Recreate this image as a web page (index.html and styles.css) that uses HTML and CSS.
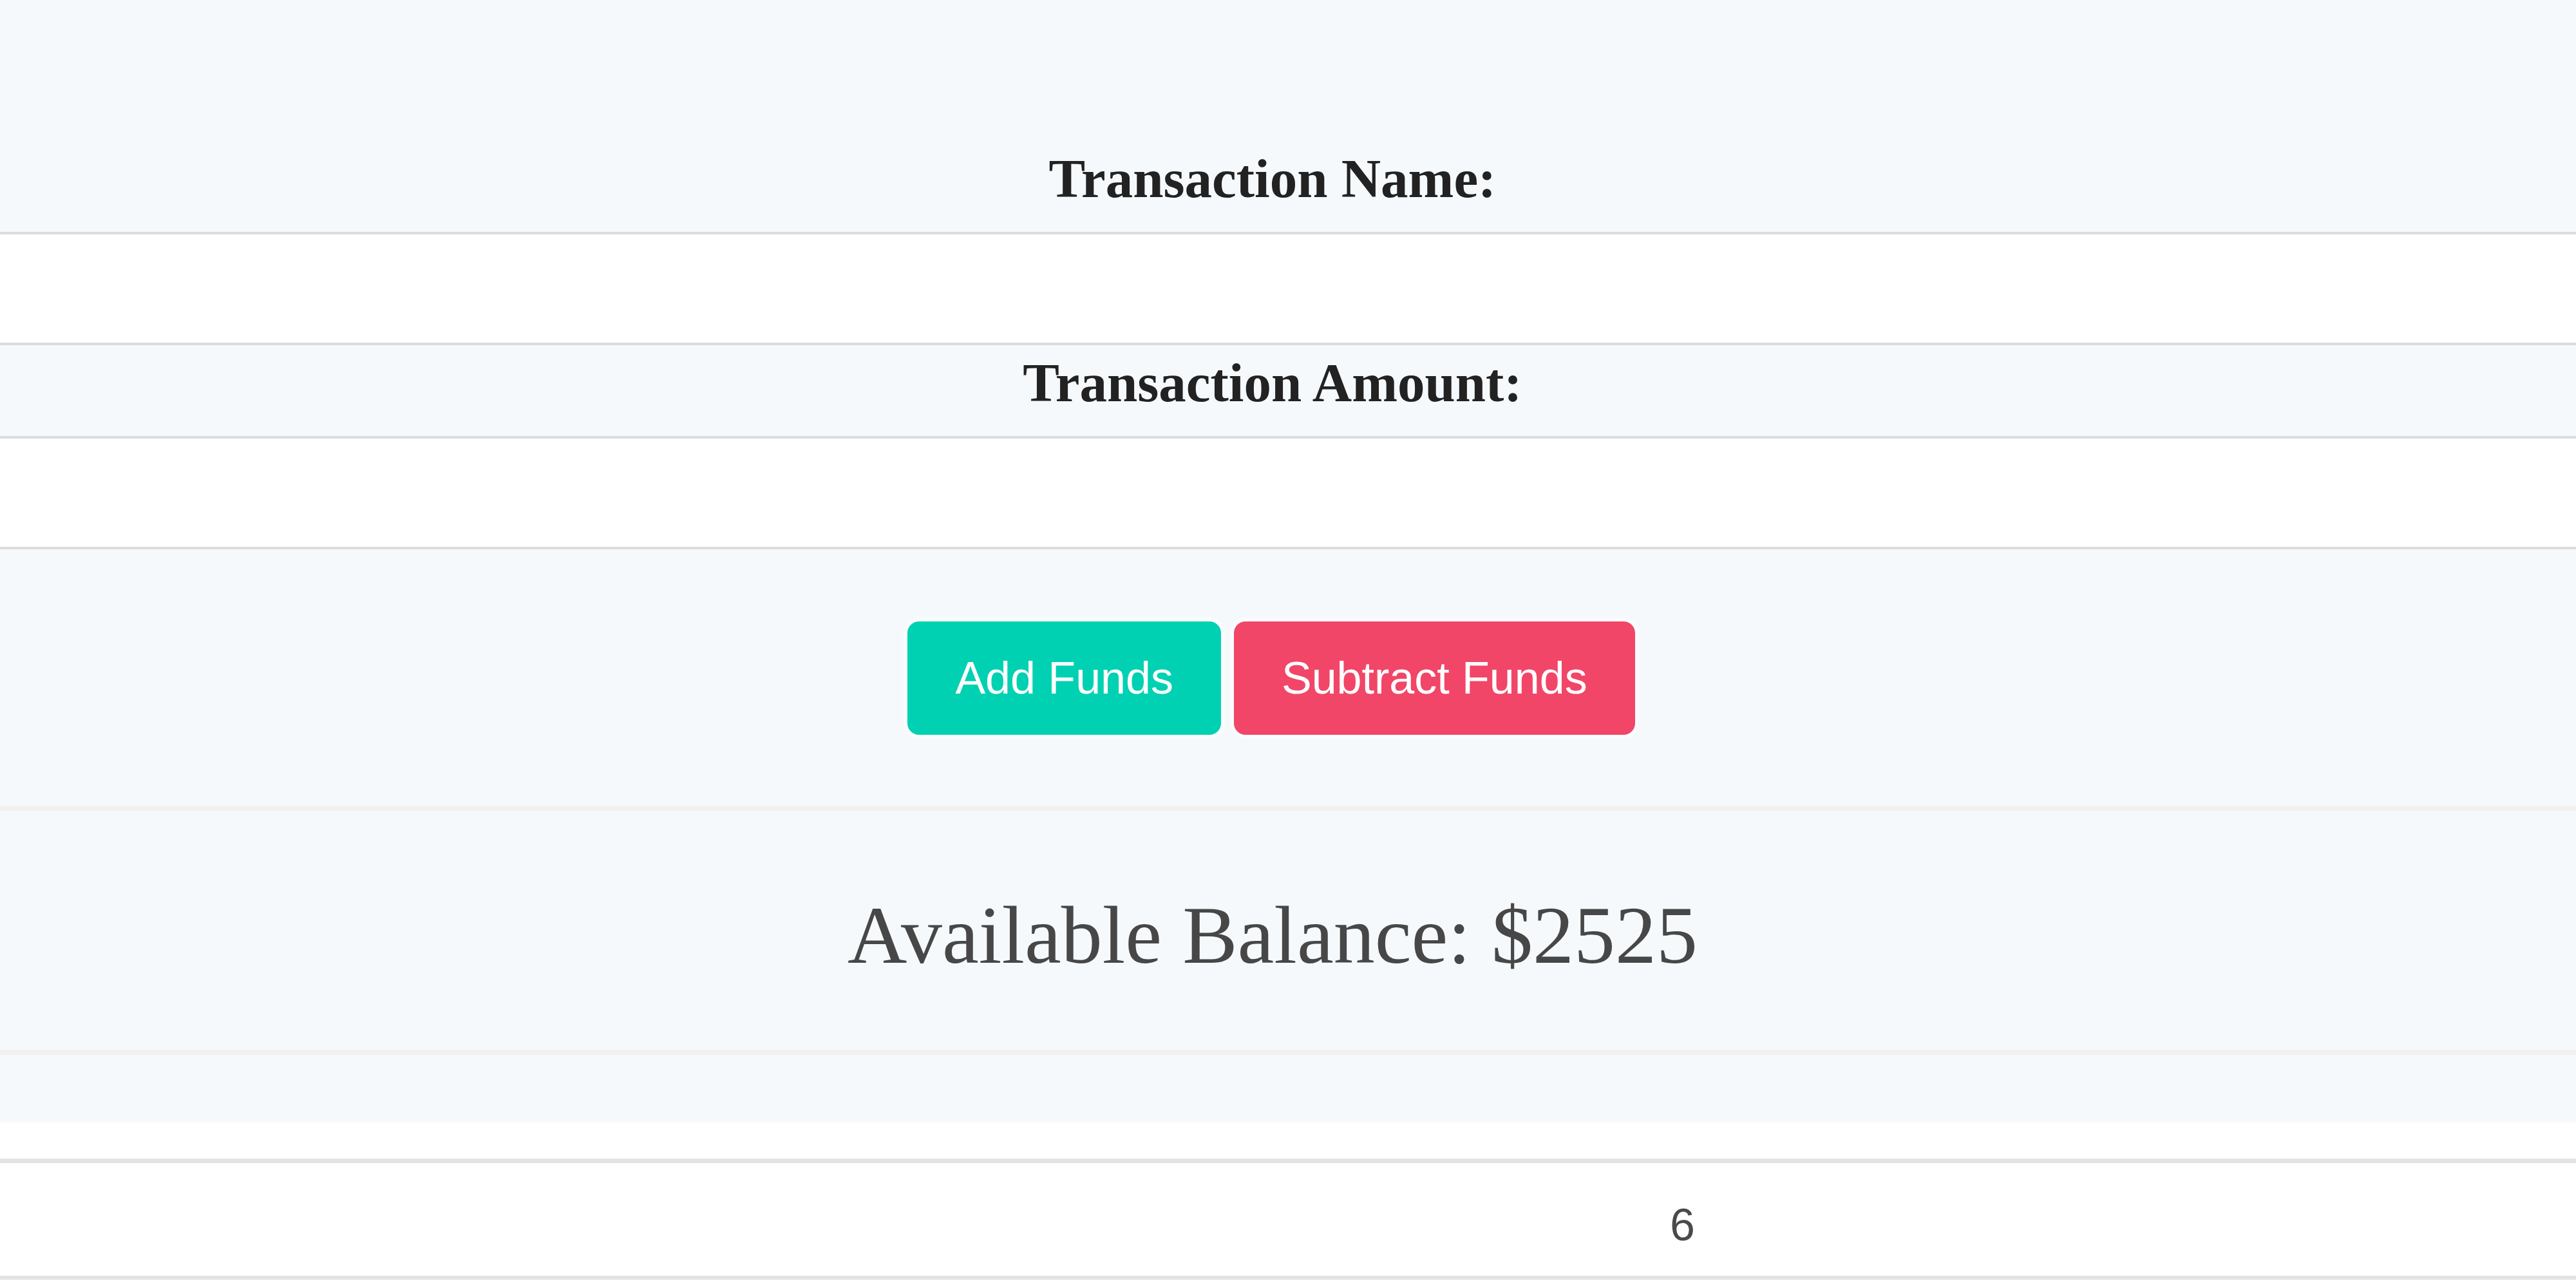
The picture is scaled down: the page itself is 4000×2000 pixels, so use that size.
FILE: index.html
```html
<!DOCTYPE html>
<html lang="en">
<head>
<meta charset="utf-8">
<title>Budget</title>
<link rel="stylesheet" href="styles.css">
</head>
<body>
<section class="form-area">
  <div class="field">
    <label class="label" for="tname">Transaction Name:</label>
    <input class="input" id="tname" type="text">
  </div>
  <div class="field">
    <label class="label" for="tamount">Transaction Amount:</label>
    <input class="input" id="tamount" type="text">
  </div>
  <div class="buttons">
    <button class="button is-primary" type="button">Add Funds</button>
    <button class="button is-danger" type="button">Subtract Funds</button>
  </div>
  <hr class="divider divider-top">
  <h2 class="balance">Available Balance: $2525</h2>
  <hr class="divider divider-bottom">
</section>
<table class="table">
  <colgroup><col class="col-first"><col class="col-second"></colgroup>
  <thead><tr><th></th><th></th></tr></thead>
  <tbody><tr><td></td><td>6</td></tr></tbody>
</table>
</body>
</html>
```

FILE: styles.css
```css
* { box-sizing: border-box; }

html, body {
  margin: 0;
  padding: 0;
  background: #ffffff;
}

body {
  font-family: "Liberation Sans", Arial, sans-serif;
  color: #4a4a4a;
}

.form-area {
  background: #f5f9fc;
  padding-top: 219px;
  padding-bottom: 105px;
}

.field {
  display: block;
}

.label {
  display: block;
  text-align: center;
  padding-right: 48px;
  padding-top: 5px;
  margin-bottom: 30px;
  font-family: "Liberation Serif", "Times New Roman", serif;
  font-weight: 700;
  font-size: 85px;
  line-height: 106px;
  color: #222222;
}

.input {
  display: block;
  width: 100%;
  height: 176px;
  margin: 0;
  padding: 0 50px;
  background: #ffffff;
  border: 0 solid #dcdcdc;
  border-top-width: 4px;
  border-bottom-width: 4px;
  box-shadow: none;
  font-family: "Liberation Sans", Arial, sans-serif;
  font-size: 70px;
  outline: none;
}

.buttons {
  display: flex;
  justify-content: center;
  gap: 20px;
  padding-right: 52px;
  margin-top: 112px;
}

.button {
  height: 176px;
  padding: 0 70px;
  border: 4px solid transparent;
  border-radius: 18px;
  font-family: "Liberation Sans", Arial, sans-serif;
  font-size: 70px;
  line-height: 100px;
  color: #ffffff;
  cursor: pointer;
  box-shadow: 0 0 8px 4px rgba(255, 255, 255, 0.9);
}

.is-primary { background: #00d1b2; }
.is-danger { background: #f14668; }

.divider {
  display: block;
  height: 8px;
  border: none;
  background: #f1f1f1;
  margin: 0;
}

.divider-top { margin-top: 110px; }

.balance {
  margin: 113px 0 98px;
  padding-right: 48px;
  text-align: center;
  font-family: "Liberation Serif", "Times New Roman", serif;
  font-weight: 400;
  font-size: 128px;
  line-height: 160px;
  color: #474747;
}

.table {
  width: 100%;
  border-collapse: collapse;
  table-layout: fixed;
  background: #ffffff;
}

.col-first { width: 63.5%; }

.table th {
  height: 59px;
  padding: 0;
  border-bottom: 7px solid #e3e3e3;
}

.table td {
  padding: 44px 53px 26px;
  font-family: "Liberation Sans", Arial, sans-serif;
  font-size: 70px;
  line-height: 105px;
  color: #4a4a4a;
  text-align: left;
  border-bottom: 6px solid #e3e3e3;
}
```
